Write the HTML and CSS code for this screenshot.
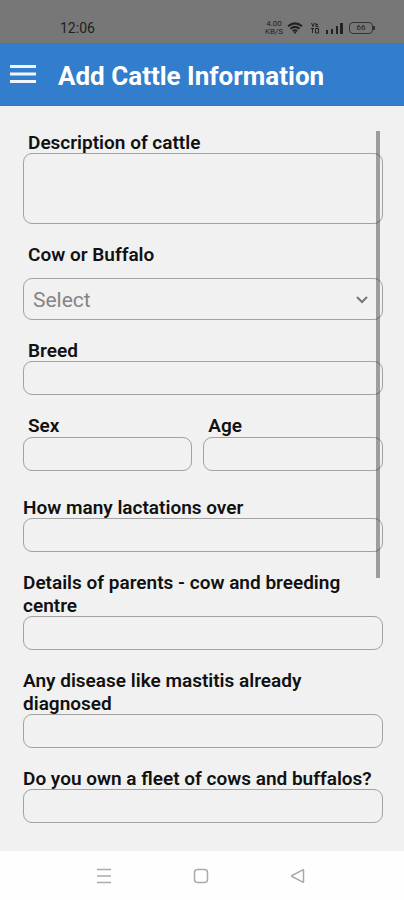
FILE: index.html
```
<!DOCTYPE html>
<html lang="en">
<head>
<meta charset="utf-8">
<meta name="viewport" content="width=device-width, initial-scale=1">
<title>Add Cattle Information</title>
<link rel="stylesheet" href="styles.css">
</head>
<body>
<div class="status-bar">
  <span class="clock">12:06</span>
  <div class="status-icons">
    <span class="speed"><span>4.00</span><span>KB/S</span></span>
    <svg class="wifi" width="16" height="12" viewBox="0 0 16 12" fill="none" stroke="currentColor" stroke-width="2">
      <path d="M1 4.2Q8-1.4 15 4.2M3.4 6.7q4.6-3.6 9.2 0M5.7 9q2.3-1.700 4.600 0"/>
      <path d="M8 12L6.300 9.800h3.400z" fill="currentColor" stroke="none"/>
    </svg>
    <svg class="volte" width="8" height="12" viewBox="0 0 8 12" fill="none" stroke="currentColor" stroke-width="1">
      <path d="M.5 1l1.500 3.500L3.500 1M5 1v3.500h2.500M5 2.500h2M1.500 6v5M4.500 6.500h3V11h-3zM0 6.500h3"/>
    </svg>
    <svg class="signal" width="17" height="12" viewBox="0 0 17 12" fill="currentColor">
      <path d="M0 8h2v4H0zM5 7h2v5H5zM10 4h2v8h-2zM14 1h3v11h-3z"/>
    </svg>
    <span class="battery">66</span>
  </div>
</div>
<header class="app-bar">
  <button class="menu-button" type="button" aria-label="Menu">
    <svg width="26" height="18" viewBox="0 0 26 18" fill="currentColor"><path d="M0 0h26v3H0zM0 7.500h26v3H0zM0 15h26v3H0z"/></svg>
  </button>
  <h1>Add Cattle Information</h1>
</header>
<main class="content">
  <form class="cattle-form">
    <div class="field inset">
      <label for="description">Description of cattle</label>
      <textarea id="description"></textarea>
    </div>
    <div class="field inset spaced">
      <label for="kind">Cow or Buffalo</label>
      <div class="select-wrap">
        <select id="kind"><option>Select</option></select>
        <svg class="chevron" width="12" height="8" viewBox="0 0 12 8" fill="none" stroke="currentColor" stroke-width="2"><path d="M1 1l5 5 5-5"/></svg>
      </div>
    </div>
    <div class="field inset">
      <label for="breed">Breed</label>
      <input id="breed" type="text">
    </div>
    <div class="field-row">
      <div class="field inset">
        <label for="sex">Sex</label>
        <input id="sex" type="text">
      </div>
      <div class="field inset">
        <label for="age">Age</label>
        <input id="age" type="text">
      </div>
    </div>
    <div class="field">
      <label for="lactations">How many lactations over</label>
      <input id="lactations" type="text">
    </div>
    <div class="field">
      <label for="parents">Details of parents - cow and breeding centre</label>
      <input id="parents" type="text">
    </div>
    <div class="field">
      <label for="disease">Any disease like mastitis already diagnosed</label>
      <input id="disease" type="text">
    </div>
    <div class="field">
      <label for="fleet">Do you own a fleet of cows and buffalos?</label>
      <input id="fleet" type="text">
    </div>
  </form>
  <div class="scroll-thumb"></div>
</main>
<nav class="system-nav">
  <button type="button" aria-label="Recent apps">
    <svg width="16" height="16" viewBox="0 0 16 16" fill="none" stroke="currentColor" stroke-width="1.500"><path d="M1 1.500h14M1 8h14M1 14.500h14"/></svg>
  </button>
  <button type="button" aria-label="Home">
    <svg width="16" height="16" viewBox="0 0 16 16" fill="none" stroke="currentColor" stroke-width="1.500"><rect x="1.500" y="1.500" width="13" height="13" rx="3"/></svg>
  </button>
  <button type="button" aria-label="Back">
    <svg width="16" height="16" viewBox="0 0 16 16" fill="none" stroke="currentColor" stroke-width="1.500" stroke-linejoin="round"><path d="M13.500 2v12Q13.500 14.500 13 14.200L2 8.500Q1.200 8 2 7.500L13 1.800Q13.500 1.500 13.500 2z"/></svg>
  </button>
</nav>
</body>
</html>
```
FILE: styles.css
```
* {
  box-sizing: border-box;
}

body {
  margin: 0;
  min-height: 100vh;
  display: flex;
  flex-direction: column;
  background: #f1f1f1;
  color: #111;
  font-family: Roboto, "Liberation Sans", sans-serif;
}

button {
  padding: 0;
  border: 0;
  background: none;
  color: inherit;
}

svg {
  display: block;
}

.status-bar {
  height: 43px;
  padding: 12px 31px 0 60px;
  display: flex;
  align-items: center;
  justify-content: space-between;
  background: #777;
  color: #222;
}

.clock {
  font-size: 14px;
  line-height: 16px;
}

.status-icons {
  display: flex;
  align-items: center;
}

.speed {
  display: flex;
  flex-direction: column;
  align-items: center;
  margin-right: 4px;
  font-size: 8px;
  line-height: 8px;
}

.wifi {
  margin-right: 8px;
}

.volte {
  margin-right: 7px;
}

.signal {
  margin-right: 6px;
}

.battery {
  position: relative;
  width: 24px;
  height: 12px;
  border: 1px solid #333;
  border-radius: 4px;
  font-size: 8px;
  line-height: 10px;
  text-align: center;
}

.battery::after {
  content: "";
  position: absolute;
  top: 3px;
  right: -3px;
  width: 2px;
  height: 4px;
  background: #333;
}

.app-bar {
  height: 63px;
  padding: 0 10px;
  display: flex;
  align-items: center;
  gap: 22px;
  background: #327dcc;
  border-bottom: 1px solid #3c78b2;
  color: #fff;
}

.menu-button {
  color: #f0f5fb;
}

.app-bar h1 {
  margin: 0;
  font-size: 26px;
  line-height: 32px;
  font-weight: 700;
  padding-top: 4px;
}

.content {
  position: relative;
  flex: 1;
}

.cattle-form {
  padding: 25px 21px 28px 23px;
  display: flex;
  flex-direction: column;
  gap: 19px;
}

.field {
  flex: 1;
  min-width: 0;
  display: flex;
  flex-direction: column;
}

.field label {
  margin-bottom: -1px;
  font-size: 19px;
  line-height: 23px;
  font-weight: 600;
}

.inset label {
  padding-left: 5px;
}

.spaced {
  gap: 13px;
}

.field-row {
  display: flex;
  gap: 11px;
  padding-bottom: 6px;
}

.field-row .field {
  flex: 16 1 0;
  gap: 1px;
}

.field-row .field + .field {
  flex-grow: 17;
}

input,
textarea,
select {
  display: block;
  width: 100%;
  height: 34px;
  margin: 0;
  padding: 0 9px;
  border: 1px solid #a2a2a2;
  border-radius: 9px;
  background: transparent;
  color: #111;
  font: inherit;
  font-size: 21px;
  outline: none;
}

textarea {
  height: 71px;
  resize: none;
}

select {
  height: 42px;
  padding-top: 2px;
  appearance: none;
  color: #858585;
}

.select-wrap {
  position: relative;
}

.chevron {
  position: absolute;
  top: 18px;
  right: 15px;
  color: #777;
  pointer-events: none;
}

.scroll-thumb {
  position: absolute;
  top: 25px;
  right: 24px;
  width: 4px;
  height: 60%;
  background: rgba(0, 0, 0, 0.35);
}

.system-nav {
  height: 49px;
  padding: 0 58px 0 56px;
  display: flex;
  align-items: center;
  justify-content: space-around;
  background: #fefefe;
  color: #aaa;
}
```
